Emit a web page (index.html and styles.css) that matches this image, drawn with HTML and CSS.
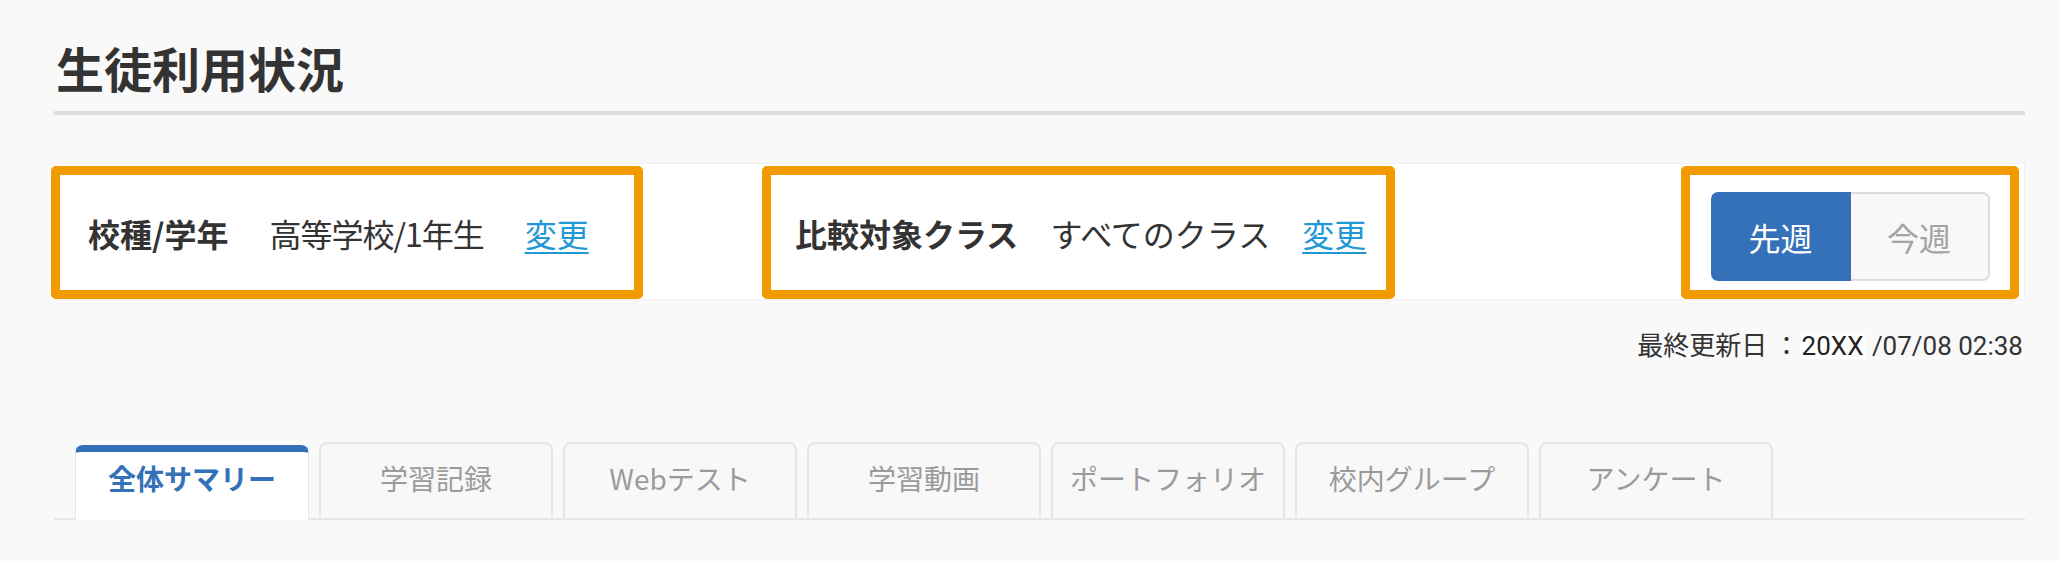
FILE: index.html
```html
<!DOCTYPE html>
<html lang="ja">
<head>
<meta charset="utf-8">
<title>生徒利用状況</title>
<link rel="stylesheet" href="styles.css">
</head>
<body>
<main class="page">
  <h1 class="page-title">生徒利用状況</h1>

  <section class="filter-panel">
    <div class="filter-item filter-item--grade">
      <span class="filter-label filter-label--wide">校種/学年</span>
      <span class="filter-value filter-value--tight">高等学校/1年生</span>
      <a class="filter-link" href="#">変更</a>
    </div>
    <div class="filter-item filter-item--class">
      <span class="filter-label">比較対象クラス</span>
      <span class="filter-value">すべてのクラス</span>
      <a class="filter-link" href="#">変更</a>
    </div>
    <div class="filter-item filter-item--week">
      <div class="week-toggle">
        <button type="button" class="week-btn is-active">先週</button>
        <button type="button" class="week-btn">今週</button>
      </div>
    </div>
  </section>

  <p class="updated">最終更新日 ：<span class="updated-hl">20XX</span> /07/08 02:38</p>

  <nav class="tabs">
    <a class="tab is-active" href="#">全体サマリー</a>
    <a class="tab" href="#">学習記録</a>
    <a class="tab" href="#">Webテスト</a>
    <a class="tab" href="#">学習動画</a>
    <a class="tab" href="#">ポートフォリオ</a>
    <a class="tab" href="#">校内グループ</a>
    <a class="tab" href="#">アンケート</a>
  </nav>
</main>
</body>
</html>
```

FILE: styles.css
```css
body {
  margin: 0;
  background: #f9f9f9;
  font-family: "Noto Sans CJK JP", sans-serif;
  color: #333;
}

.page {
  padding: 43px 35px 0 54px;
}

.page-title {
  margin: 0;
  font-size: 48px;
  line-height: 48px;
  font-weight: 700;
  color: #333;
  padding: 0 0 20px 2px;
  border-bottom: 4px solid #dedede;
}

.filter-panel {
  margin-top: 48px;
  height: 137px;
  box-sizing: border-box;
  background: #fff;
  border: 1px solid #f0f0f0;
  display: flex;
  align-items: flex-start;
  padding-top: 2px;
}

.filter-item {
  box-sizing: border-box;
  height: 133px;
  border: 9px solid #f29b00;
  border-radius: 5px;
  display: flex;
  align-items: center;
  font-size: 32px;
  line-height: 44px;
}

.filter-item--grade {
  width: 592px;
  margin-left: -4px;
  padding-left: 28px;
}

.filter-item--class {
  width: 633px;
  margin-left: 119px;
  padding-left: 24px;
}

.filter-item--week {
  width: 338px;
  margin-left: auto;
  margin-right: 5px;
  justify-content: center;
  padding-top: 8px;
}

.filter-label {
  font-weight: 700;
  margin-right: 32px;
}

.filter-label--wide {
  margin-right: 41px;
}

.filter-value {
  margin-right: 32px;
}

.filter-value--tight {
  letter-spacing: -1px;
  margin-right: 41px;
}

.filter-link {
  color: #1f98d5;
  text-decoration: underline;
  text-underline-offset: 5px;
  text-decoration-thickness: 2px;
}

.week-toggle {
  display: flex;
}

.week-btn {
  box-sizing: border-box;
  width: 139px;
  height: 89px;
  padding: 0;
  font-family: inherit;
  font-size: 32px;
  color: #a3a3a3;
  background: #f8f8f8;
  border: 2px solid #dddddd;
  border-left: 0;
  border-radius: 0 7px 7px 0;
}

.week-btn.is-active {
  width: 140px;
  color: #fff;
  background: #3471b8;
  border: 2px solid #3471b8;
  border-radius: 7px 0 0 7px;
}

.updated {
  margin: 28px 2px 0 0;
  text-align: right;
  font-family: Roboto, "Noto Sans CJK JP", sans-serif;
  font-size: 26px;
  line-height: 36px;
  color: #333;
}

.updated-hl {
  display: inline-block;
  line-height: 26px;
  padding: 0 2px;
  background: #fff;
  color: #222;
}

.tabs {
  margin-top: 78px;
  display: flex;
  align-items: flex-end;
  gap: 10px;
  padding-left: 21px;
  border-bottom: 2px solid #e6e6e6;
}

.tab {
  box-sizing: border-box;
  width: 234px;
  text-align: center;
  font-size: 28px;
  line-height: 40px;
  color: #9b9b9b;
  text-decoration: none;
  background: #f8f8f8;
  border: 2px solid #e6e6e6;
  border-bottom: 0;
  border-radius: 8px 8px 0 0;
  padding: 14px 0 20px;
}

.tab.is-active {
  color: #3471b8;
  font-weight: 700;
  background: #fff;
  border: 1px solid #e6e6e6;
  border-top: 7px solid #3471b8;
  border-bottom: 0;
  padding: 6px 0 22px;
  margin-bottom: -2px;
}
```
